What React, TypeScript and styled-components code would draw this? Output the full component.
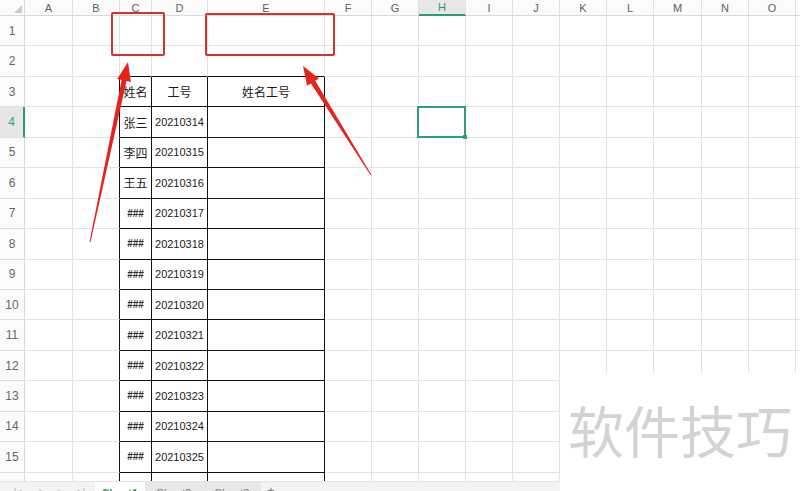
import React from 'react';
import styled, { createGlobalStyle } from 'styled-components';

const GlobalStyle = createGlobalStyle`
  html, body {
    margin: 0;
    padding: 0;
    background: #ffffff;
    overflow: hidden;
  }
`;

const COLS = [
  { name: 'A', width: 48 },
  { name: 'B', width: 47 },
  { name: 'C', width: 32 },
  { name: 'D', width: 56 },
  { name: 'E', width: 117 },
  { name: 'F', width: 47 },
  { name: 'G', width: 47 },
  { name: 'H', width: 47 },
  { name: 'I', width: 47 },
  { name: 'J', width: 47 },
  { name: 'K', width: 47 },
  { name: 'L', width: 47 },
  { name: 'M', width: 48 },
  { name: 'N', width: 47 },
  { name: 'O', width: 47 },
  { name: '', width: 47 },
];

const ROW_COUNT = 16;
const ROW_HEIGHT = 30.45;
// last row is only a sliver above the sheet tabs, its label and data stay hidden
const LAST_LABELLED_ROW = 15;

const names = ['张三', '李四', '王五'];

// table occupies C..E (col index 2..4), starting at row 3
const cellText = (row: number, col: number): { text: string; kind: 'cjk' | 'num' | 'hash' } | null => {
  if (row > LAST_LABELLED_ROW) return null;
  if (row === 3) {
    if (col === 2) return { text: '姓名', kind: 'cjk' };
    if (col === 3) return { text: '工号', kind: 'cjk' };
    if (col === 4) return { text: '姓名工号', kind: 'cjk' };
  }
  if (row >= 4) {
    if (col === 2) {
      const n = names[row - 4];
      return n ? { text: n, kind: 'cjk' } : { text: '###', kind: 'hash' };
    }
    if (col === 3) return { text: String(20210314 + row - 4), kind: 'num' };
  }
  return null;
};

const inTable = (row: number, col: number) => row >= 3 && col >= 2 && col <= 4;

function arrowPoints(tail: [number, number], tip: [number, number], headLen = 19, headHalf = 7, shaftHalf = 2.5, tailHalf = 0.5) {
  const dx = tip[0] - tail[0];
  const dy = tip[1] - tail[1];
  const len = Math.hypot(dx, dy);
  const ux = dx / len;
  const uy = dy / len;
  const nx = -uy;
  const ny = ux;
  const bx = tip[0] - ux * headLen;
  const by = tip[1] - uy * headLen;
  const pts = [
    [tail[0] + nx * tailHalf, tail[1] + ny * tailHalf],
    [bx + nx * shaftHalf, by + ny * shaftHalf],
    [bx + nx * headHalf, by + ny * headHalf],
    [tip[0], tip[1]],
    [bx - nx * headHalf, by - ny * headHalf],
    [bx - nx * shaftHalf, by - ny * shaftHalf],
    [tail[0] - nx * tailHalf, tail[1] - ny * tailHalf],
  ];
  return pts.map((p) => p.map((v) => v.toFixed(1)).join(',')).join(' ');
}

export default function App() {
  return (
    <>
      <GlobalStyle />
      <Page>
        <SheetArea>
          <Grid>
            <Corner>
              <CornerMark />
            </Corner>
            {COLS.map((c, i) => (
              <ColHeader key={i} $active={c.name === 'H'}>
                {c.name}
              </ColHeader>
            ))}
            {Array.from({ length: ROW_COUNT }, (_, i) => {
              const row = i + 1;
              return (
                <React.Fragment key={row}>
                  <RowHeader $active={row === 4}>{row <= LAST_LABELLED_ROW ? row : ''}</RowHeader>
                  {COLS.map((c, col) => {
                    const content = cellText(row, col);
                    const rightDark = inTable(row, col) || (row >= 3 && col === 1);
                    const bottomDark = row >= 2 && col >= 2 && col <= 4;
                    return (
                      <Cell
                        key={col}
                        $rightDark={rightDark}
                        $bottomDark={bottomDark}
                        $selected={row === 4 && c.name === 'H'}
                        $kind={content ? content.kind : 'cjk'}
                      >
                        {content?.text}
                      </Cell>
                    );
                  })}
                </React.Fragment>
              );
            })}
          </Grid>

          <Marker style={{ left: 111, top: 12, width: 54, height: 44 }} />
          <Marker style={{ left: 205, top: 13, width: 130, height: 43 }} />

          <ArrowLayer width={800} height={481} viewBox="0 0 800 481">
            <polygon points={arrowPoints([90, 242], [128, 62])} fill="#e3231c" />
            <polygon points={arrowPoints([371, 175], [303, 66])} fill="#e3231c" />
          </ArrowLayer>
        </SheetArea>

        <TabBar>
          <NavGroup>
            <NavIcon>|&lt;</NavIcon>
            <NavIcon>&lt;</NavIcon>
            <NavIcon>&gt;</NavIcon>
            <NavIcon>&gt;|</NavIcon>
          </NavGroup>
          <SheetTab $active>Sheet1</SheetTab>
          <SheetTab>Sheet2</SheetTab>
          <SheetTab>Sheet3</SheetTab>
          <AddTab>+</AddTab>
        </TabBar>

        <Watermark>软件技巧</Watermark>
      </Page>
    </>
  );
}

const Page = styled.div`
  position: relative;
  width: 800px;
  height: 491px;
  overflow: hidden;
  display: flex;
  flex-direction: column;
  background: #ffffff;
  font-family: "Liberation Sans", "Noto Sans CJK SC", sans-serif;
`;

const SheetArea = styled.div`
  position: relative;
  height: 481px;
  flex: none;
  overflow: hidden;
`;

const Grid = styled.div`
  display: grid;
  grid-template-columns: 25px ${COLS.map((c) => `${c.width}px`).join(' ')};
  grid-template-rows: 16px repeat(${ROW_COUNT}, ${ROW_HEIGHT}px);
`;

const Corner = styled.div`
  position: relative;
  border-right: 1px solid #d9d9d9;
  border-bottom: 1px solid #d9d9d9;
  background: #fbfbfb;
`;

const CornerMark = styled.div`
  position: absolute;
  right: 2px;
  bottom: 2px;
  width: 0;
  height: 0;
  border-left: 8px solid transparent;
  border-bottom: 8px solid #cdcdcd;
`;

const ColHeader = styled.div<{ $active?: boolean }>`
  display: flex;
  align-items: center;
  justify-content: center;
  font-size: 11px;
  color: ${(p) => (p.$active ? '#2a9d6f' : '#606060')};
  background: ${(p) => (p.$active ? '#e7e7e7' : '#fbfbfb')};
  border-right: 1px solid #e0e0e0;
  border-bottom: ${(p) => (p.$active ? '2px solid #2a9d6f' : '1px solid #d9d9d9')};
  box-sizing: border-box;
`;

const RowHeader = styled.div<{ $active?: boolean }>`
  display: flex;
  align-items: center;
  justify-content: center;
  font-size: 12px;
  color: ${(p) => (p.$active ? '#3a9d7c' : '#666666')};
  background: ${(p) => (p.$active ? '#e6e6e6' : '#fbfbfb')};
  border-right: ${(p) => (p.$active ? '2px solid #2a9d6f' : '1px solid #d9d9d9')};
  border-bottom: 1px solid #e0e0e0;
  box-sizing: border-box;
`;

const Cell = styled.div<{ $rightDark: boolean; $bottomDark: boolean; $selected: boolean; $kind: 'cjk' | 'num' | 'hash' }>`
  position: relative;
  display: flex;
  align-items: center;
  justify-content: center;
  box-sizing: border-box;
  border-right: 1px solid ${(p) => (p.$rightDark ? '#111111' : '#e2e2e2')};
  border-bottom: 1px solid ${(p) => (p.$bottomDark ? '#111111' : '#e2e2e2')};
  white-space: nowrap;
  font-family: ${(p) =>
    p.$kind === 'cjk' ? '"Noto Sans CJK SC", sans-serif' : '"Liberation Sans", sans-serif'};
  font-size: ${(p) => (p.$kind === 'cjk' ? '12px' : p.$kind === 'hash' ? '10px' : '11px')};
  font-weight: ${(p) => (p.$kind === 'hash' ? 700 : 400)};
  color: ${(p) => (p.$kind === 'hash' ? '#2a2a2a' : '#1a1a1a')};

  ${(p) =>
    p.$selected &&
    `
    &::after {
      content: '';
      position: absolute;
      left: -2px;
      top: -1px;
      right: -1px;
      bottom: -1px;
      border: 2px solid #2f9e70;
    }
    &::before {
      content: '';
      position: absolute;
      right: -2px;
      bottom: -2px;
      width: 4px;
      height: 4px;
      background: #2f9e70;
      z-index: 1;
    }
  `}
`;

const Marker = styled.div`
  position: absolute;
  box-sizing: border-box;
  border: 2px solid #d8302e;
  border-radius: 2px;
`;

const ArrowLayer = styled.svg`
  position: absolute;
  left: 0;
  top: 0;
  pointer-events: none;
`;

const TabBar = styled.div`
  flex: none;
  height: 24px;
  display: flex;
  align-items: flex-start;
  background: #f3f3f3;
  border-top: 1px solid #e4e4e4;
  box-sizing: border-box;
  font-size: 11px;
`;

const NavGroup = styled.div`
  display: flex;
  gap: 9px;
  width: 95px;
  padding-left: 12px;
  box-sizing: border-box;
  color: #b5b5b5;
  padding-top: 4px;
`;

const NavIcon = styled.span`
  width: 12px;
  text-align: center;
  font-size: 10px;
  line-height: 14px;
`;

const SheetTab = styled.div<{ $active?: boolean }>`
  width: ${(p) => (p.$active ? '50px' : '58px')};
  padding-top: 4px;
  text-align: center;
  line-height: 14px;
  background: ${(p) => (p.$active ? '#ffffff' : '#e7e7e7')};
  color: ${(p) => (p.$active ? '#1f9a5f' : '#777777')};
  font-weight: ${(p) => (p.$active ? 700 : 400)};
  height: 24px;
  box-sizing: border-box;
`;

const AddTab = styled.div`
  padding: 2px 0 0 6px;
  color: #777777;
  font-size: 13px;
  line-height: 14px;
`;

const Watermark = styled.div`
  position: absolute;
  left: 560px;
  top: 373px;
  right: 0;
  bottom: 0;
  background: #ffffff;
  display: flex;
  justify-content: center;
  padding-top: 24px;
  box-sizing: border-box;
  font-family: "Noto Sans CJK SC", sans-serif;
  font-size: 56px;
  line-height: 64px;
  color: #d3d3d3;
  white-space: nowrap;
`;
